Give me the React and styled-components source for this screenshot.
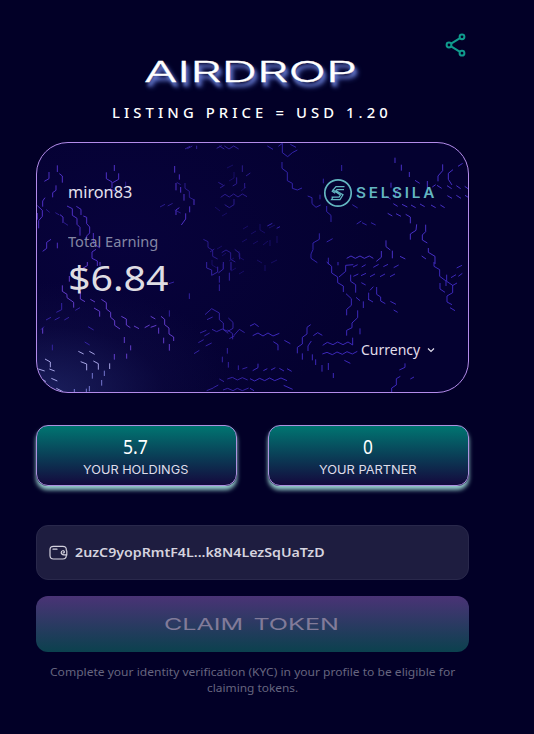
import React, { useLayoutEffect, useRef, useState } from 'react';
import styled, { createGlobalStyle } from 'styled-components';

const GlobalStyle = createGlobalStyle`
  * { box-sizing: border-box; }
  body { margin: 0; background: #020027; color: #fff; font-family: "Noto Sans", sans-serif; }
  button { font: inherit; color: inherit; }
`;

const Page = styled.main`
  width: 534px;
  height: 734px;
  padding: 33px 65px 0 36px;
  background: #020027;
  overflow: hidden;
`;
const TopBar = styled.div`
  display: flex;
  justify-content: flex-end;
  height: 24px;
  padding-right: 1px;
`;
const ShareButton = styled.button`
  width: 24px;
  height: 24px;
  padding: 0;
  border: 0;
  background: none;
  color: #109b8d;
`;
const Header = styled.header`
  display: flex;
  flex-direction: column;
  align-items: flex-start;
  height: 85px;
`;
const FitBox = styled.span`
  display: block;
  flex: none;
  width: ${(p) => p.$width}px;
  white-space: nowrap;
`;
const FitInner = styled.span`
  display: inline-block;
  transform-origin: left center;
`;

function Fit({ width, children, className }) {
  const ref = useRef(null);
  const [scale, setScale] = useState(1);
  useLayoutEffect(() => {
    setScale(width / ref.current.offsetWidth);
  }, [width, children]);
  return (
    <FitBox $width={width} className={className}>
      <FitInner ref={ref} style={{ transform: `scaleX(${scale})` }}>{children}</FitInner>
    </FitBox>
  );
}

const Title = styled(Fit)`
  margin: -3px 0 0 108px;
  font: 300 29px/36px Inter, sans-serif;
  -webkit-text-stroke: .3px #fff;
  text-shadow: 1px 4px 3px #7186df, 2px 5px 4px #4c5fb4;
`;
const Price = styled(Fit)`
  margin: 12px 0 0 76px;
  font: 500 14.5px/20px "Noto Sans", sans-serif;
  letter-spacing: 4px;
`;
const Card = styled.section`
  position: relative;
  height: 251px;
  padding: 35px 33px 0 31px;
  border: 1px solid #b38bea;
  border-radius: 32px;
  overflow: hidden;
  background:
    radial-gradient(ellipse 190px 110px at 3% 100%, rgba(35, 42, 108, .7), rgba(20, 18, 78, .3) 60%, transparent),
    radial-gradient(ellipse 260px 190px at 20% 40%, rgba(9, 3, 65, .7), transparent),
    #040130;
`;
const Pattern = styled.svg`
  position: absolute;
  left: -1px;
  top: -1px;
  fill: none;
`;
const CardBody = styled.div`
  position: relative;
`;
const CardTop = styled.div`
  display: flex;
  justify-content: space-between;
  height: 52px;
`;
const User = styled(Fit)`
  margin-top: 2px;
  font: 400 16px/24px "Noto Sans", sans-serif;
  color: #e4e1ef;
`;
const Brand = styled.div`
  display: flex;
  align-items: center;
  gap: 4px;
  height: 30px;
  margin-right: -2px;
  color: #63b6c1;
`;
const BrandName = styled(Fit)`
  font: 600 14px/20px Inter, sans-serif;
  letter-spacing: 2.5px;
`;
const Label = styled(Fit)`
  padding-top: 2px;
  font: 400 13.5px/20px "Noto Sans", sans-serif;
  color: #8487a4;
`;
const Amount = styled(Fit)`
  margin-top: 4px;
  font: 400 35px/44px "Noto Sans", sans-serif;
  color: #dfdde3;
`;
const Currency = styled.button`
  display: flex;
  align-items: center;
  gap: 7px;
  margin: 39px 0 0 auto;
  padding: 0;
  height: 22px;
  border: 0;
  background: none;
  color: #e1ddeb;
  font: 400 14px/22px "Noto Sans", sans-serif;
`;
const Stats = styled.div`
  display: grid;
  grid-template-columns: 1fr 1fr;
  gap: 31px;
  margin-top: 32px;
`;
const Stat = styled.div`
  display: flex;
  flex-direction: column;
  align-items: center;
  height: 61px;
  padding: 9px 2px 0 0;
  border: 1px solid #ad91df;
  border-radius: 12px;
  background: linear-gradient(#007571, #14093d);
  box-shadow: 0 4px 4px #94c9ca;
`;
const StatValue = styled(Fit)`
  font: 400 19px/24px "Noto Sans", sans-serif;
`;
const StatLabel = styled(Fit)`
  margin-top: 1px;
  font: 400 11.5px/20px Inter, sans-serif;
  color: #dedce9;
`;
const Wallet = styled.div`
  display: flex;
  align-items: center;
  gap: 7px;
  height: 55px;
  margin-top: 39px;
  padding-left: 12px;
  border: 1px solid #29284b;
  border-radius: 12px;
  background: #1e1d40;
  color: #d5d3df;
`;
const Address = styled(Fit)`
  font: 600 12.5px/20px "Noto Sans", sans-serif;
`;
const Claim = styled.button`
  display: flex;
  justify-content: center;
  align-items: center;
  width: 100%;
  height: 56px;
  margin-top: 16px;
  padding: 0 3px 1px 0;
  border: 0;
  border-radius: 12px;
  background: linear-gradient(#4a3376, #0b414e);
`;
const ClaimText = styled(Fit)`
  font: 400 16.5px/24px Inter, sans-serif;
  word-spacing: 2px;
  text-align: left;
  color: #817b99;
`;
const Notice = styled.p`
  display: flex;
  flex-direction: column;
  align-items: center;
  margin: 12px 1px 0 0;
  font: 400 11.5px/16px "Noto Sans", sans-serif;
  color: #66657f;
`;

/* Honeycomb edges, drawn on a grid three times finer than the card. */
const edges = [
  { x: -6, y: -6, color: '#3a28a8', d: 'M465 39l15-8m-8 7l15-8M500 39v-10M568 30l15 9m0-9l14 9 14-9 15 9M560 37l15-8' },
  { x: -6, y: -6, color: '#5a38dc', d: 'M82 88v20M57 108v20l-14 8M88 113l9 7v20M78 148v15l-10 7v14M45 185l-7 10v17M22 209l15 14v18l-11 13v23M22 231v20M90 236l9 7v18M111 210l16 8v20l14 9v18l9 9v25M139 211l14 9v17M160 240l10 4v19l9 10v18l-9 9v11M190 291v31l20 14M63 310l-13 9v18l-12 9M82 320v17M198 340l-12 8v19l16 8v15M253 87v18M229 109v19l17 10v18M266 112v18l-18 10M240 158l16 8M198 190l16-9M434 90v20M448 115v16M438 141v22M452 153v17M462 174v20M448 215l-10 7v15M467 232v17l-13 18M492 190v17M479 211v18' },
  { x: -6, y: -6, color: '#31209a', d: 'M48 220l11 9M76 230l12 7M102 260l12 8M287 137v18M390 213l15-8M413 210l15-8M434 222l18 9M440 139l12 7M465 141v16l13 9v18l15 8M565 139l15 9m-10 8l14-9M572 184l13-9 13 8 13-9 13 9 13-9 14 8M584 206l14 9 14-9v-17M608 150l12-7v-19M520 310l14 7v17l14 9v18l15 8M575 350l13-8 14 8v20l14 8M540 348l13-9M614 340l15 12v18M637 88v20M648 120l13-9M644 141v16' },
  { x: 214, y: -6, color: '#3b29bc', d: 'M52 30l17 10M85 31l12-9v28l16 12 14-12 15-8M121 25l17 9M96 78v19l16 12v25l15 8v15l15 5 14-6M173 180l13 5v18l12 11 14-7M210 190v-14M230 210v17l13 11v20M275 87v18M220 128v14M307 206l16 10M52 270l15-8M80 277l10-5M230 318l18-10M208 292v18l-19 11v20l-6 13v13l19 13M235 365v20M320 264l14-9M336 260l14 7M363 260l14 7' },
  { x: 214, y: -6, color: '#5339df', d: 'M435 65v16M454 86v18M578 85v19l-14 16v16M609 101l-14 11v18l11 17M624 91l14-9M423 140v15M450 158l-13 9v15M495 133l14 9M532 135v20M547 153l10-7M478 108v15M561 148l14 9M591 149l14 9M619 149l13 9M644 151l13 9M592 179l14 8M619 178l14 9M645 178l13 8M408 181l14 8M430 203l13 8M456 205l16 8M483 207l14 8M510 204l14 8M543 207l14 8M571 207l13 8M413 232l14 8M438 233l15 8M467 235l14 8v19M500 265l-2 18-17 11v17M527 266v21l-10 10v15l15 9M535 336v13l20 12v23M408 313v19l13 10M394 345v19l-15 12M427 344v23M290 367l13-7 13 7 14-7 13 7 15-7 12 7M450 361l16 8M515 360l13 9' },
  { x: -6, y: 120, color: '#7046e2', d: 'M172 0v11l-14 8M210 0v11M118 42v17M97 70v18l14 9v10l20 14v16M151 88v23l14 8M181 112l14 8M192 138l17 10v16M214 112l15 10v19l13 10v15l12 10v14l16 11M274 163l15 8v18l12 8M312 192l15 8M344 197l15-8M362 163l14 8M393 163l11 9v16l13 10v18l14 9v12M386 197v18M362 196l17-6M401 227v17M418 246v20M283 225v18M302 250v15M290 275v15M253 276v17M38 198v17' },
  { x: -6, y: 120, color: '#3c28b3', d: 'M417 65l15-5M478 94v17M95 123v20l-16 8M48 174l15-8M74 174l15-8M103 174l14-8M42 194l-9 9M164 240l15 9M67 248v17M136 145l14-8M174 194l17 10M418 145v19M530 0v18l15 6v16l18-10v-16M580 0v21l-15 12M603 0v25M568 42v20M598 32v24M568 67v20M525 158l20-18 23 13v20l12 10v20l15 11M531 173l17-8M595 168l14 13v18l-15 9-17-7-17 8-14-7M510 213l19-8M523 222l16-9M505 242l16-9M527 252l18-9M492 275l16-10M593 204l15 11v17M613 219l15-17 16 10M598 230l16-9M592 258v17M577 284v17M595 300v17M625 310v14M637 321l15-5M592 351l15-5 15 8 15-7 16 7M568 351l14 8M579 384l14-5 16 7 13-7 15 7 19-8M550 377l15-8M530 386l20-8' },
  { x: -6, y: 120, color: '#c0bdff', d: 'M145 268l16 8M178 268l16 9M45 291l16 9v16M152 299l18 7v19M190 297l15 8v18M239 304v17M25 321l19 6M58 321l16 6M64 349l18 8M38 352l10 7M79 379l20 10' },
  { x: -6, y: 120, color: '#8588e4', d: 'M223 326v16M187 333v17M215 354v17M178 372v16M133 381v10M169 380v10' },
  { x: 214, y: 120, color: '#4630d1', d: 'M230 0l15 13v20l18 12v17l17 10v18M264 0v10M310 8l-23 2v18l-20 17M302 38v20l15 10v24M288 95l16 15v20l-14 12v18M323 145v22l-17 16v14l-16 8v16M340 118v20M330 116l-12-10M309 15l14-7M335 15l12-7M370 16l16-9M400 14l14-7M431 17l15-8M310 43l15-7M333 41l15-7M360 44l15-8M390 44l15-8M420 44l15-8M334 62l13 7M356 92v22M360 85l10-11M380 75v22l12 8v12l14 8M355 112l14 8M552 0v13l17 10v20l19 14v15M590 38v20l18 12v22l-17 10v18l15 8M607 71l14-8M570 63v18l15 10M603 47l15-9M625 43l12-9M620 18l16-8M600 137l15 9M421 118l17 9M431 144l12 7M0 192l14-7 12 9M8 221l16-8 15 9 15-9 15 9 19-8M70 239l14 9v17M103 235l18 10M182 188l-11 8v20l-14 10v20l-15 10v18M190 221l13-9 14 8M184 237l-10 15v15M157 274v19M187 277v18M197 292v17M218 250l14-9 17 7 14-8 16 8 15-8 14 9v-22M217 276l14-5 16 7 14-8 16 7 14-8 16 7 15-8M283 295l18 9M235 303v21M216 309v20M250 333v15M330 199v18M465 304v12l-17 8M451 343l-12 7v19l-14 9v12M481 351l11-6M8 326l16-9v-12M0 350l14 7 15-8 15 7 15-8 15 8 19-8 18 8M0 379l12 7M40 326l12-6M63 324l13-7M88 319l14 8M111 320l14 8M101 370l27 12' },
];

function Honeycomb() {
  return (
    <Pattern width="433" height="251" viewBox="0 0 433 251" aria-hidden="true">
      {edges.map((group, i) => (
        <path key={i} d={group.d} stroke={group.color} strokeWidth="3" opacity=".86"
          transform={`translate(${group.x} ${group.y}) scale(.33333)`} />
      ))}
      <g stroke="#26158b" strokeWidth=".8" opacity=".7">
        <path d="M207 87l5-3m3 8l5-3m4-7v6l5 3m4-5l6-3M206 100l5-3m6 5l5-3m5 4l5-4M234 98v6m7-10v7M181 107l5-3m0 10l4-3m3 8l5-3m5-7v6l5 3M176 118v5l5 3m6-4v6m8 1l5-3m3 6l5-3M221 118l5 3m3 8v-6m6-2l6-3M191 26l6-3M193 39l5-3v-6m7 19l5-4M179 65l5 4m2 5l5-3" />
      </g>
    </Pattern>
  );
}

export default function App() {
  return (
    <>
      <GlobalStyle />
      <Page>
        <TopBar>
          <ShareButton aria-label="Share">
            <svg width="24" height="24" viewBox="0 0 24 24" fill="none" stroke="currentColor" strokeWidth="2">
              <circle cx="5" cy="12" r="2.4" /><circle cx="18" cy="3.8" r="2.4" /><circle cx="18" cy="20.2" r="2.4" />
              <path d="M7.1 10.7L16 5.1M7.1 13.3L16 18.9" />
            </svg>
          </ShareButton>
        </TopBar>
        <Header>
          <Title width={213}>AIRDROP</Title>
          <Price width={280}>LISTING PRICE = USD 1.20</Price>
        </Header>
        <Card>
          <Honeycomb />
          <CardBody>
            <CardTop>
              <User width={64}>miron83</User>
              <Brand>
                <svg width="29" height="30" viewBox="0 0 29 30" fill="none" stroke="currentColor">
                  <circle cx="15" cy="15" r="13.2" strokeWidth="1.7" />
                  <path d="M21.5 8.5H13L10 12L17.5 17L16 19H8.5M21 11.5H14L13 12.7L20 16.8L17 21.5H8.5L10.3 19M10 12L9.2 13.3L12.2 15.2" strokeWidth="1.25" />
                </svg>
                <BrandName width={81}>SELSILA</BrandName>
              </Brand>
            </CardTop>
            <Label width={90}>Total Earning</Label>
            <Amount width={100}>$6.84</Amount>
            <Currency>
              <Fit width={59}>Currency</Fit>
              <svg width="8" height="8" viewBox="0 0 8 8" fill="none" stroke="currentColor" strokeWidth="1.2"><path d="M1 2.5l3 3 3-3" /></svg>
            </Currency>
          </CardBody>
        </Card>
        <Stats>
          <Stat><StatValue width={25}>5.7</StatValue><StatLabel width={105}>YOUR HOLDINGS</StatLabel></Stat>
          <Stat><StatValue width={10}>0</StatValue><StatLabel width={98}>YOUR PARTNER</StatLabel></Stat>
        </Stats>
        <Wallet>
          <svg width="19" height="16" viewBox="0 0 19 16" fill="none" stroke="currentColor" strokeWidth="1.2" strokeLinecap="round">
            <path d="M17.3 5.2V4.7Q17.3 1.3 13.8 1.3H4.5Q1 1.3 1 4.8v5.7Q1 14 4.5 14h9.3q3.5 0 3.5-3.5M4 4.2h4M17.8 5.8v4H15q-2.8-.2-2.8-2.3c0-2.2 3.2-2.4 3.2-.4q-.2 1-1.3.8" />
          </svg>
          <Address width={250}>2uzC9yopRmtF4L...k8N4LezSqUaTzD</Address>
        </Wallet>
        <Claim><ClaimText width={175}>CLAIM TOKEN</ClaimText></Claim>
        <Notice>
          <Fit width={405}>Complete your identity verification (KYC) in your profile to be eligible for</Fit>
          <Fit width={91}>claiming tokens.</Fit>
        </Notice>
      </Page>
    </>
  );
}
